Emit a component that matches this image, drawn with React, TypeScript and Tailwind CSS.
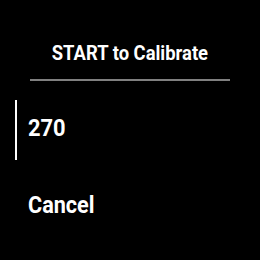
export default function App() {
  return (
    <div className="flex h-[260px] w-[260px] flex-col bg-black font-['Roboto',sans-serif] font-bold text-white">
      <div className="flex justify-center pt-[43px]">
        <span className="inline-block scale-x-[0.92] text-[20px] leading-none">START to Calibrate</span>
      </div>
      <div className="mx-[30px] mt-[16px] h-[2px] bg-[#808080]" />
      <div className="mt-[19px] flex h-[60px]">
        <div className="ml-[15px] h-full w-[2px] bg-white" />
        <span className="ml-[11px] mt-[17px] inline-block origin-left scale-x-[0.95] text-[23px] leading-none">
          270
        </span>
      </div>
      <div className="ml-[28px] mt-[34px]">
        <span className="inline-block origin-left scale-x-[0.94] text-[23px] leading-none">Cancel</span>
      </div>
    </div>
  );
}
